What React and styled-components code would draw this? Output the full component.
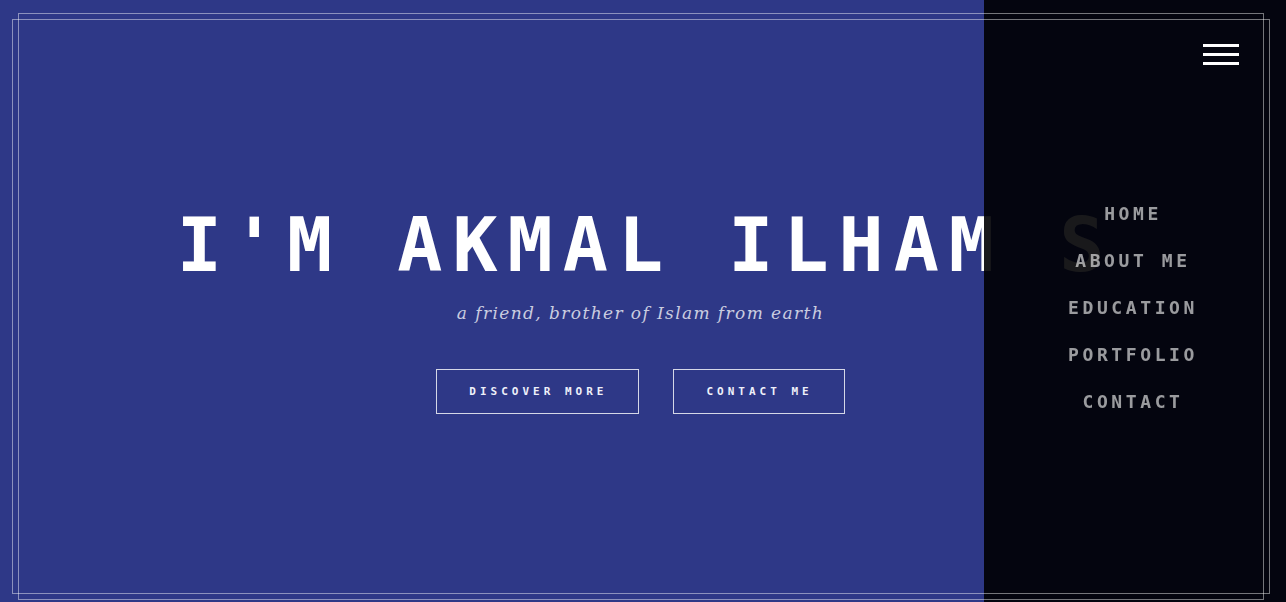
import React from "react"
import styled, { createGlobalStyle } from "styled-components"

const GlobalStyle = createGlobalStyle`
  html, body {
    margin: 0;
    padding: 0;
    background: #2e3887;
    overflow: hidden;
  }
  * { box-sizing: border-box; }
`

const navItems = ["HOME", "ABOUT ME", "EDUCATION", "PORTFOLIO", "CONTACT"]

const App = () => (
  <>
    <GlobalStyle />
    <Page>
      <Hero>
        <Title>I'M AKMAL ILHAM S</Title>
        <Subtitle>a friend, brother of Islam from earth</Subtitle>
        <Actions>
          <OutlineButton href="#about">DISCOVER MORE</OutlineButton>
          <OutlineButton href="#contact">CONTACT ME</OutlineButton>
        </Actions>
      </Hero>
    </Page>
    <SidePanel>
      <Burger aria-label="menu">
        <span />
        <span />
        <span />
      </Burger>
      <Nav>
        {navItems.map(item => (
          <NavLink key={item} href="#">{item}</NavLink>
        ))}
      </Nav>
    </SidePanel>
    <Frame inset={[13, 22, 2, 18]} />
    <Frame inset={[19, 16, 8, 12]} />
  </>
)

const Page = styled.main`
  width: calc(100vw - 5px);
  height: 100vh;
  background: #2e3887;
`

const Hero = styled.section`
  display: flex;
  flex-direction: column;
  align-items: center;
  padding-top: 208px;
`

const Title = styled.h1`
  margin: 0;
  font-family: "DejaVu Sans Mono", "Liberation Mono", monospace;
  font-weight: 700;
  font-size: 75px;
  line-height: 1;
  letter-spacing: 10px;
  padding-left: 10px;
  color: #ffffff;
  white-space: nowrap;
`

const Subtitle = styled.p`
  margin: 18px 0 0;
  font-family: "DejaVu Serif", "Liberation Serif", serif;
  font-style: italic;
  font-size: 17px;
  line-height: 24px;
  letter-spacing: 1.4px;
  color: rgba(255, 255, 255, 0.75);
`

const Actions = styled.div`
  display: flex;
  gap: 34px;
  margin-top: 44px;
`

const OutlineButton = styled.a`
  display: flex;
  align-items: center;
  height: 45px;
  padding: 0 31px 0 32px;
  border: 1px solid rgba(255, 255, 255, 0.8);
  font-family: "DejaVu Sans Mono", "Liberation Mono", monospace;
  font-weight: 700;
  font-size: 11px;
  letter-spacing: 4px;
  color: #eef0fa;
  text-decoration: none;
`

const SidePanel = styled.aside`
  position: fixed;
  top: 0;
  right: 0;
  width: 302px;
  height: 100vh;
  background: rgba(0, 0, 2, 0.9);
  display: flex;
  flex-direction: column;
  align-items: center;
`

const Burger = styled.button`
  position: absolute;
  top: 44px;
  right: 47px;
  display: flex;
  flex-direction: column;
  gap: 6px;
  padding: 0;
  border: 0;
  background: none;
  span {
    display: block;
    width: 36px;
    height: 3px;
    background: #ffffff;
  }
`

const Nav = styled.nav`
  display: flex;
  flex-direction: column;
  align-items: center;
  gap: 25px;
  margin-top: 203px;
  padding-right: 4px;
`

const NavLink = styled.a`
  font-family: "DejaVu Sans Mono", "Liberation Mono", monospace;
  font-weight: 700;
  font-size: 18px;
  line-height: 22px;
  letter-spacing: 3.6px;
  color: rgba(255, 255, 255, 0.6);
  text-decoration: none;
`

const Frame = styled.div`
  position: fixed;
  top: ${p => p.inset[0]}px;
  right: ${p => p.inset[1]}px;
  bottom: ${p => p.inset[2]}px;
  left: ${p => p.inset[3]}px;
  border: 1px solid rgba(255, 255, 255, 0.45);
  pointer-events: none;
`

export default App
